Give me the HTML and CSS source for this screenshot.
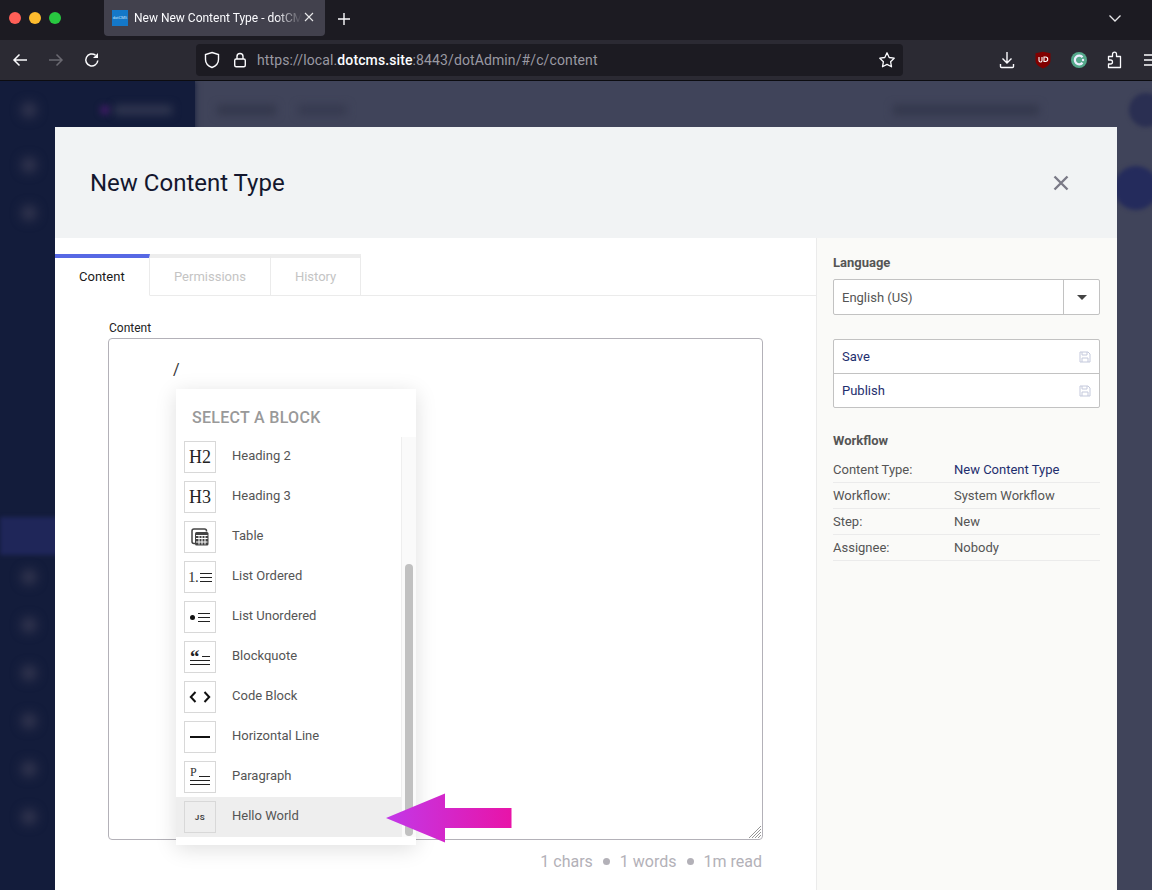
FILE: index.html
```html
<!DOCTYPE html>
<html lang="en">
<head>
<meta charset="utf-8">
<title>New Content Type</title>
<link rel="stylesheet" href="styles.css">
</head>
<body>
<div class="page">
  <div class="tabbar">
    <div class="lights"><i class="light red"></i><i class="light yellow"></i><i class="light green"></i></div>
    <div class="btab">
      <span class="favicon">dotCMS</span>
      <span class="btab-title">New New Content Type - dotCMS</span>
      <svg class="btab-x" width="12" height="12" viewBox="0 0 12 12"><path d="M2 2l8 8M10 2l-8 8" stroke="#e8e8ea" stroke-width="1.1" fill="none"/></svg>
    </div>
    <svg class="plus" width="14" height="14" viewBox="0 0 14 14"><path d="M7 1v12M1 7h12" stroke="#fbfbfe" stroke-width="1.4" fill="none"/></svg>
    <svg class="chev" width="14" height="9" viewBox="0 0 14 9"><path d="M1.5 1.5L7 7l5.5-5.5" stroke="#e8e8ea" stroke-width="1.3" fill="none"/></svg>
  </div>
  <div class="toolbar">
    <div class="navs">
      <svg width="16" height="16" viewBox="0 0 16 16"><path d="M15 8H2M7.500 2.500L2 8l5.500 5.500" stroke="#fbfbfe" stroke-width="1.500" fill="none"/></svg>
      <svg width="16" height="16" viewBox="0 0 16 16"><path d="M1 8h13M8.500 2.500L14 8l-5.500 5.500" stroke="#6a6971" stroke-width="1.500" fill="none"/></svg>
      <svg width="16" height="16" viewBox="0 0 16 16"><path d="M13.800 8.500A6 6 0 1 1 11.500 3.200" stroke="#fbfbfe" stroke-width="1.500" fill="none"/><path d="M14 1v5H9z" fill="#fbfbfe"/></svg>
    </div>
    <div class="urlbar">
      <svg width="16" height="18" viewBox="0 0 16 18"><path d="M8 1.500l6.500 2v5c0 4-3 6.700-6.500 8-3.500-1.300-6.500-4-6.500-8v-5z" stroke="#fbfbfe" stroke-width="1.400" fill="none"/></svg>
      <svg class="lock" width="14" height="16" viewBox="0 0 14 16"><path d="M4 7V4.500a3 3 0 0 1 6 0V7" stroke="#fbfbfe" stroke-width="1.400" fill="none"/><rect x="1.700" y="7" width="10.600" height="7.800" rx="1.500" stroke="#fbfbfe" stroke-width="1.400" fill="none"/></svg>
      <span class="url">https://local.<b>dotcms.site</b>:8443/dotAdmin/#/c/content</span>
      <svg class="star" width="18" height="18" viewBox="0 0 18 18"><path d="M9 1.800l2.200 4.700 5 .7-3.600 3.500.9 5.100L9 13.400l-4.500 2.400.9-5.100L1.800 7.200l5-.7z" stroke="#fbfbfe" stroke-width="1.300" fill="none" stroke-linejoin="round"/></svg>
    </div>
    <div class="exts">
      <svg width="16" height="18" viewBox="0 0 16 18"><path d="M8 1v11M3.500 7.500L8 12l4.500-4.500M1.500 13v2.500a1 1 0 0 0 1 1h11a1 1 0 0 0 1-1V13" stroke="#fbfbfe" stroke-width="1.400" fill="none"/></svg>
      <svg width="16" height="18" viewBox="0 0 16 18"><path d="M8 .8l7.500 1.500v7.500c0 3.500-3.500 6-7.500 7.700C4 15.800.5 13.300.5 9.800V2.300z" fill="#800000"/><path d="M4 6v3.500a1.500 1.500 0 0 0 3 0V6M9 6h1.500a2 2 0 0 1 0 4.500H9z" stroke="#fff" stroke-width="1.100" fill="none"/></svg>
      <svg width="16" height="18" viewBox="0 0 16 18"><circle cx="8" cy="9" r="8" fill="#54a88a"/><path d="M11.500 6.300A4.300 4.300 0 1 0 11.500 11.700" stroke="#eef" stroke-width="2.200" fill="none"/><circle cx="12" cy="9" r="1.200" fill="#eef"/></svg>
      <svg width="16" height="18" viewBox="0 0 16 18"><path d="M1.500 16.500v-3.500h2a2 2 0 0 0 0-4h-2V5.500h4V3.200a2 2 0 0 1 4 0v2.300h4v11z" stroke="#fbfbfe" stroke-width="1.300" fill="none" stroke-linejoin="round"/></svg>
      <svg width="16" height="18" viewBox="0 0 16 18"><path d="M1 4h14M1 9h14M1 14h14" stroke="#fbfbfe" stroke-width="1.400" fill="none"/></svg>
    </div>
  </div>
  <div class="app">
    <aside class="side">
      <div class="side-row side-logo"><i class="blob"></i><i class="logo-mark"></i><i class="logo-text"></i></div>
      <div class="side-row"><i class="blob"></i></div>
      <div class="side-row"><i class="blob"></i></div>
      <div class="side-gap"></div>
      <div class="side-active"></div>
      <div class="side-row"><i class="blob"></i></div>
      <div class="side-row"><i class="blob"></i></div>
      <div class="side-row"><i class="blob"></i></div>
      <div class="side-row"><i class="blob"></i></div>
      <div class="side-row"><i class="blob"></i></div>
      <div class="side-row"><i class="blob"></i></div>
    </aside>
    <div class="backdrop">
      <div class="crumbs"><i class="crumb-a"></i><i class="crumb-b"></i><i class="site"></i><i class="avatar"></i></div>
      <i class="fab"></i>
    </div>

    <section class="modal">
      <header class="modal-head">
        <h1>New Content Type</h1>
        <svg width="18" height="18" viewBox="0 0 18 18"><path d="M2.500 2.500l13 13M15.500 2.500l-13 13" stroke="#7b7a86" stroke-width="2.400" fill="none"/></svg>
      </header>
      <div class="modal-body">
        <div class="main">
          <nav class="tabs">
            <span class="tab tab-on">Content</span>
            <span class="tab">Permissions</span>
            <span class="tab">History</span>
          </nav>
          <div class="field">
            <label class="field-label">Content</label>
            <div class="editor">
              <p class="slash">/</p>
              <svg class="grip" width="14" height="14" viewBox="0 0 14 14"><path d="M1 13L13 1M4 13L13 4M7 13l6-6M10 13l3-3" stroke="#8a8a8a" stroke-width=".9" fill="none"/></svg>
              <div class="menu">
                <div class="menu-head">SELECT A BLOCK</div>
                <div class="menu-scroll">
                  <ul class="menu-list">
                    <li class="item"><span class="ico serif">H2</span>Heading 2</li>
                    <li class="item"><span class="ico serif">H3</span>Heading 3</li>
                    <li class="item"><span class="ico"><svg width="20" height="20" viewBox="0 0 20 20"><path d="M5 16.500H4a2 2 0 0 1-2-2V4a2 2 0 0 1 2-2h10.500a2 2 0 0 1 2 2v.5" stroke="#444" stroke-width="1.500" fill="none"/><rect x="5" y="5" width="13.500" height="13.500" rx="1.500" fill="#444"/><path d="M6 8.500h11.500M6 11.500h11.500M6 15h11.500M9 8.500v9M12 8.500v9M15 8.500v9" stroke="#fff" stroke-width="1" fill="none"/></svg></span>Table</li>
                    <li class="item"><span class="ico"><span class="ico-mark serif-sm">1.</span><i class="lines"></i></span>List Ordered</li>
                    <li class="item"><span class="ico"><i class="dot"></i><i class="lines"></i></span>List Unordered</li>
                    <li class="item"><span class="ico ico-doc"><span class="ico-top"><span class="quote">“</span><i class="rule"></i></span><i class="rule-full"></i><i class="rule-full"></i></span>Blockquote</li>
                    <li class="item"><span class="ico"><svg width="22" height="14" viewBox="0 0 22 14"><path d="M6.500 2L1.800 7l4.700 5M15.500 2l4.700 5-4.700 5" stroke="#111" stroke-width="2" fill="none"/></svg></span>Code Block</li>
                    <li class="item"><span class="ico"><i class="hr"></i></span>Horizontal Line</li>
                    <li class="item"><span class="ico ico-doc"><span class="ico-top"><span class="para">P</span><i class="rule"></i></span><i class="rule-full"></i><i class="rule-full"></i></span>Paragraph</li>
                    <li class="item item-on"><span class="ico ico-js">JS</span>Hello World</li>
                  </ul>
                  <div class="track"><i class="thumb"></i></div>
                </div>
              </div>
            </div>
            <div class="counts"><span>1 chars</span><i class="sep"></i><span>1 words</span><i class="sep"></i><span>1m read</span></div>
          </div>
        </div>
        <aside class="panel">
          <h2 class="panel-title">Language</h2>
          <div class="select"><span class="select-val">English (US)</span><span class="select-btn"><i class="caret"></i></span></div>
          <div class="actions">
            <a class="action">Save<svg width="12" height="12" viewBox="0 0 12 12"><path d="M1 1h8l2 2v8H1zM3 1v3h5V1M3 11V7h6v4" stroke="#c4c9dc" stroke-width="1" fill="none"/></svg></a>
            <a class="action">Publish<svg width="12" height="12" viewBox="0 0 12 12"><path d="M1 1h8l2 2v8H1zM3 1v3h5V1M3 11V7h6v4" stroke="#c4c9dc" stroke-width="1" fill="none"/></svg></a>
          </div>
          <h2 class="panel-title wf-title">Workflow</h2>
          <dl class="wf">
            <div class="wf-row"><dt>Content Type:</dt><dd class="link">New Content Type</dd></div>
            <div class="wf-row"><dt>Workflow:</dt><dd>System Workflow</dd></div>
            <div class="wf-row"><dt>Step:</dt><dd>New</dd></div>
            <div class="wf-row"><dt>Assignee:</dt><dd>Nobody</dd></div>
          </dl>
        </aside>
      </div>
    </section>

    <svg class="arrow" width="128" height="52" viewBox="0 0 128 52">
      <defs><linearGradient id="arrowfill" x1="0" y1="0" x2="1" y2="0"><stop offset="0" stop-color="#c238e8"/><stop offset="1" stop-color="#e814a8"/></linearGradient></defs>
      <path d="M1 26L60 1.500V16h66.500v20H60v14.500z" fill="url(#arrowfill)"/>
    </svg>
  </div>
</div>
</body>
</html>
```

FILE: styles.css
```css
* { box-sizing: border-box; }
html, body { margin: 0; padding: 0; }
body { font-family: Roboto, "Liberation Sans", sans-serif; background: #40445a; }
.page { width: 1152px; height: 890px; overflow: hidden; display: flex; flex-direction: column; }

/* browser chrome */
.tabbar { height: 40px; background: #1c1b22; display: flex; align-items: flex-start; position: relative; flex: none; }
.lights { display: flex; gap: 8px; padding: 12px 0 0 9px; width: 104px; flex: none; }
.light { width: 12px; height: 12px; border-radius: 50%; display: block; }
.red { background: #ff5f57; }
.yellow { background: #febc2e; }
.green { background: #28c840; }
.btab { width: 221px; height: 36px; background: #42414d; border-radius: 0 0 4px 4px; display: flex; align-items: center; padding-left: 8px; color: #fbfbfe; font: 400 12px Roboto, sans-serif; flex: none; }
.favicon { width: 16px; height: 16px; background: #1478c8; color: #cfe6fa; font-size: 4px; line-height: 16px; text-align: center; overflow: hidden; flex: none; margin-right: 6px; }
.btab-title { width: 168px; white-space: nowrap; overflow: hidden; flex: none; -webkit-mask-image: linear-gradient(90deg, #000 142px, transparent 168px); mask-image: linear-gradient(90deg, #000 142px, transparent 168px); }
.btab-x { margin-left: 1px; margin-top: -3px; flex: none; }
.plus { margin: 12px 0 0 12px; }
.chev { margin: 14px 30px 0 auto; }
.toolbar { height: 41px; background: #2b2a33; border-bottom: 1px solid #0c0c10; display: flex; align-items: flex-start; flex: none; padding-top: 4px; }
.navs { width: 196px; display: flex; gap: 20px; padding: 8px 0 0 12px; flex: none; }
.urlbar { width: 707px; height: 32px; background: #1c1b22; border-radius: 4px; display: flex; align-items: center; padding: 0 7px 0 8px; flex: none; }
.lock { margin-left: 13px; }
.url { margin-left: 10px; color: #9a99a2; font: 14px Roboto, sans-serif; letter-spacing: .11px; white-space: nowrap; }
.url b { color: #fbfbfe; font-weight: 500; }
.star { margin-left: auto; }
.exts { display: flex; gap: 20px; padding: 7px 0 0 96px; flex: none; }

/* blurred page behind the dialog */
.app { flex: 1; display: flex; position: relative; overflow: hidden; }
.side { width: 195px; background: #131c3b; display: flex; flex-direction: column; flex: none; box-shadow: 0 0 6px #131c3b; position: relative; z-index: 1; }
.side-row { height: 48px; display: flex; align-items: center; padding-left: 22px; flex: none; }
.side-logo { height: 58px; margin-bottom: 2px; }
.blob { width: 14px; height: 14px; border-radius: 50%; background: #3c3d55; filter: blur(6px); display: block; flex: none; }
.logo-mark { width: 10px; height: 10px; border-radius: 50%; background: #3c1c62; filter: blur(3px); margin-left: 64px; flex: none; }
.logo-text { width: 58px; height: 10px; background: #30364f; filter: blur(4px); margin-left: 4px; flex: none; }
.side-gap { height: 280px; flex: none; }
.side-active { height: 38px; background: #1f2659; margin-bottom: -2px; flex: none; filter: blur(2px); }
.backdrop { flex: 1; min-width: 0; position: relative; background: #40445a; }
.crumbs { display: flex; align-items: center; height: 58px; padding-left: 22px; }
.crumb-a { width: 59px; height: 10px; background: #33374c; filter: blur(4px); flex: none; }
.crumb-b { width: 49px; height: 10px; background: #363a50; filter: blur(4px); margin-left: 22px; flex: none; }
.site { width: 146px; height: 10px; background: #33374c; filter: blur(4px); margin-left: 546px; flex: none; }
.avatar { width: 34px; height: 34px; border-radius: 50%; background: #2a2f52; filter: blur(2px); margin-left: 90px; flex: none; }
.fab { position: absolute; right: -6px; top: 85px; width: 44px; height: 44px; border-radius: 50%; background: #242b5c; filter: blur(2px); }

/* dialog */
.modal { position: absolute; left: 55px; top: 46px; width: 1062px; height: 780px; background: #fff; display: flex; flex-direction: column; z-index: 2; }
.modal-head { height: 111px; background: #f1f3f4; display: flex; align-items: center; justify-content: space-between; padding: 0 47px 0 35px; flex: none; }
.modal-head h1 { margin: 0; font: 400 24px Roboto, sans-serif; color: #14172e; }
.modal-body { flex: 1; display: flex; min-height: 0; }
.main { width: 761px; flex: none; }
.tabs { display: flex; height: 42px; margin-top: 16px; border-bottom: 1px solid #ebebeb; }
.tab { height: 42px; padding: 0 24px; display: flex; align-items: center; font-size: 13px; color: #c4c4c4; background: #fff; border-top: 4px solid #ededed; border-right: 1px solid #ebebeb; border-bottom: 1px solid #ebebeb; }
.tab-on { width: 95px; color: #1a1a1a; border-top-color: #5768e4; border-bottom-color: #fff; }
.field { padding: 24px 53px 0 53px; }
.field-label { display: block; font-size: 12px; line-height: 16px; color: #222; padding-left: 1px; }
.editor { position: relative; height: 502px; margin-top: 2px; border: 1px solid #b3b1b8; border-radius: 4px; }
.slash { margin: 21px 0 0 64px; font-size: 16px; line-height: 19px; color: #333; }
.grip { position: absolute; right: 0; bottom: 0; }
.counts { display: flex; justify-content: flex-end; align-items: center; gap: 10px; padding-right: 1px; margin-top: 12px; font-size: 16px; line-height: 19px; color: #b3b1b8; }
.sep { width: 7px; height: 7px; border-radius: 50%; background: #b3b1b8; }

/* block menu */
.menu { position: absolute; left: 67px; top: 50px; width: 240px; height: 456px; background: #fff; box-shadow: 0 4px 20px rgba(0,0,0,.13); display: flex; flex-direction: column; }
.menu-head { height: 48px; padding: 19px 16px 0; font-size: 16px; font-weight: 500; letter-spacing: .3px; line-height: 19px; color: #999; flex: none; }
.menu-scroll { display: flex; height: 400px; }
.menu-list { list-style: none; margin: 0; padding: 0; flex: 1; }
.item { height: 40px; display: flex; align-items: center; padding: 0 8px 3px; font-size: 13px; color: #555; }
.item-on { background: #eee; }
.ico { width: 32px; height: 32px; margin: 3px 16px 0 0; border: 1px solid #d8d8d8; display: flex; align-items: center; justify-content: center; gap: 2px; flex: none; color: #222; }
.serif { font: 18px "Liberation Serif", serif; }
.serif-sm { font: 15px "Liberation Serif", serif; }
.ico-mark { color: #333; letter-spacing: -.5px; }
.lines { width: 12px; height: 9px; border-top: 1px solid #222; border-bottom: 1px solid #222; display: block; background: linear-gradient(#222, #222) center / 100% 1px no-repeat; }
.dot { width: 5px; height: 5px; border-radius: 50%; background: #111; display: block; margin-right: 1px; }
.ico-doc { flex-direction: column; gap: 3px; align-items: stretch; padding: 0 5px; }
.ico-top { display: flex; align-items: flex-end; height: 7px; gap: 2px; }
.rule { flex: 1; height: 1px; background: #222; display: block; }
.rule-full { height: 1px; background: #222; display: block; }
.quote { font: bold 19px/13px "Liberation Serif", serif; height: 7px; color: #222; }
.para { font: 12px/9px "Liberation Serif", serif; height: 9px; color: #333; }
.hr { width: 20px; height: 2px; background: #111; display: block; }
.ico-js { font: 700 8px Roboto, sans-serif; letter-spacing: .6px; color: #444; }
.track { width: 15px; flex: none; border-left: 1px solid #eee; background: #fafafa; padding: 127px 3px 0; }
.thumb { display: block; width: 8px; height: 272px; background: #c1c1c1; border-radius: 4px; }

/* right panel */
.panel { flex: 1; background: #fafaf8; border-left: 1px solid #ebebeb; padding: 16px 17px 0 16px; color: #555; }
.panel-title { margin: 0; font-size: 13px; font-weight: 700; line-height: 18px; color: #555; }
.select { display: flex; height: 36px; margin-top: 7px; background: #fff; border: 1px solid #c2c2c2; border-radius: 2px; font-size: 13px; color: #555; }
.select-val { flex: 1; padding-left: 8px; line-height: 35px; border-right: 1px solid #c2c2c2; }
.select-btn { width: 35px; display: flex; align-items: center; justify-content: center; }
.caret { width: 0; height: 0; border-left: 5px solid transparent; border-right: 5px solid transparent; border-top: 5px solid #444; }
.actions { margin-top: 24px; border: 1px solid #c2c2c2; border-radius: 2px; background: #fff; }
.action { height: 33px; display: flex; align-items: center; justify-content: space-between; padding: 0 8px; font-size: 13px; color: #1e2e6e; }
.action + .action { border-top: 1px solid #c2c2c2; height: 34px; }
.wf-title { margin-top: 24px; }
.wf { margin: 7px 0 0; }
.wf-row { display: flex; height: 26px; align-items: center; border-bottom: 1px solid #ebebeb; font-size: 13px; color: #555; }
.wf-row dt { width: 121px; }
.wf-row dd { margin: 0; }
.link { color: #1e2e6e; }

.arrow { position: absolute; left: 385px; top: 711px; z-index: 3; }
```
